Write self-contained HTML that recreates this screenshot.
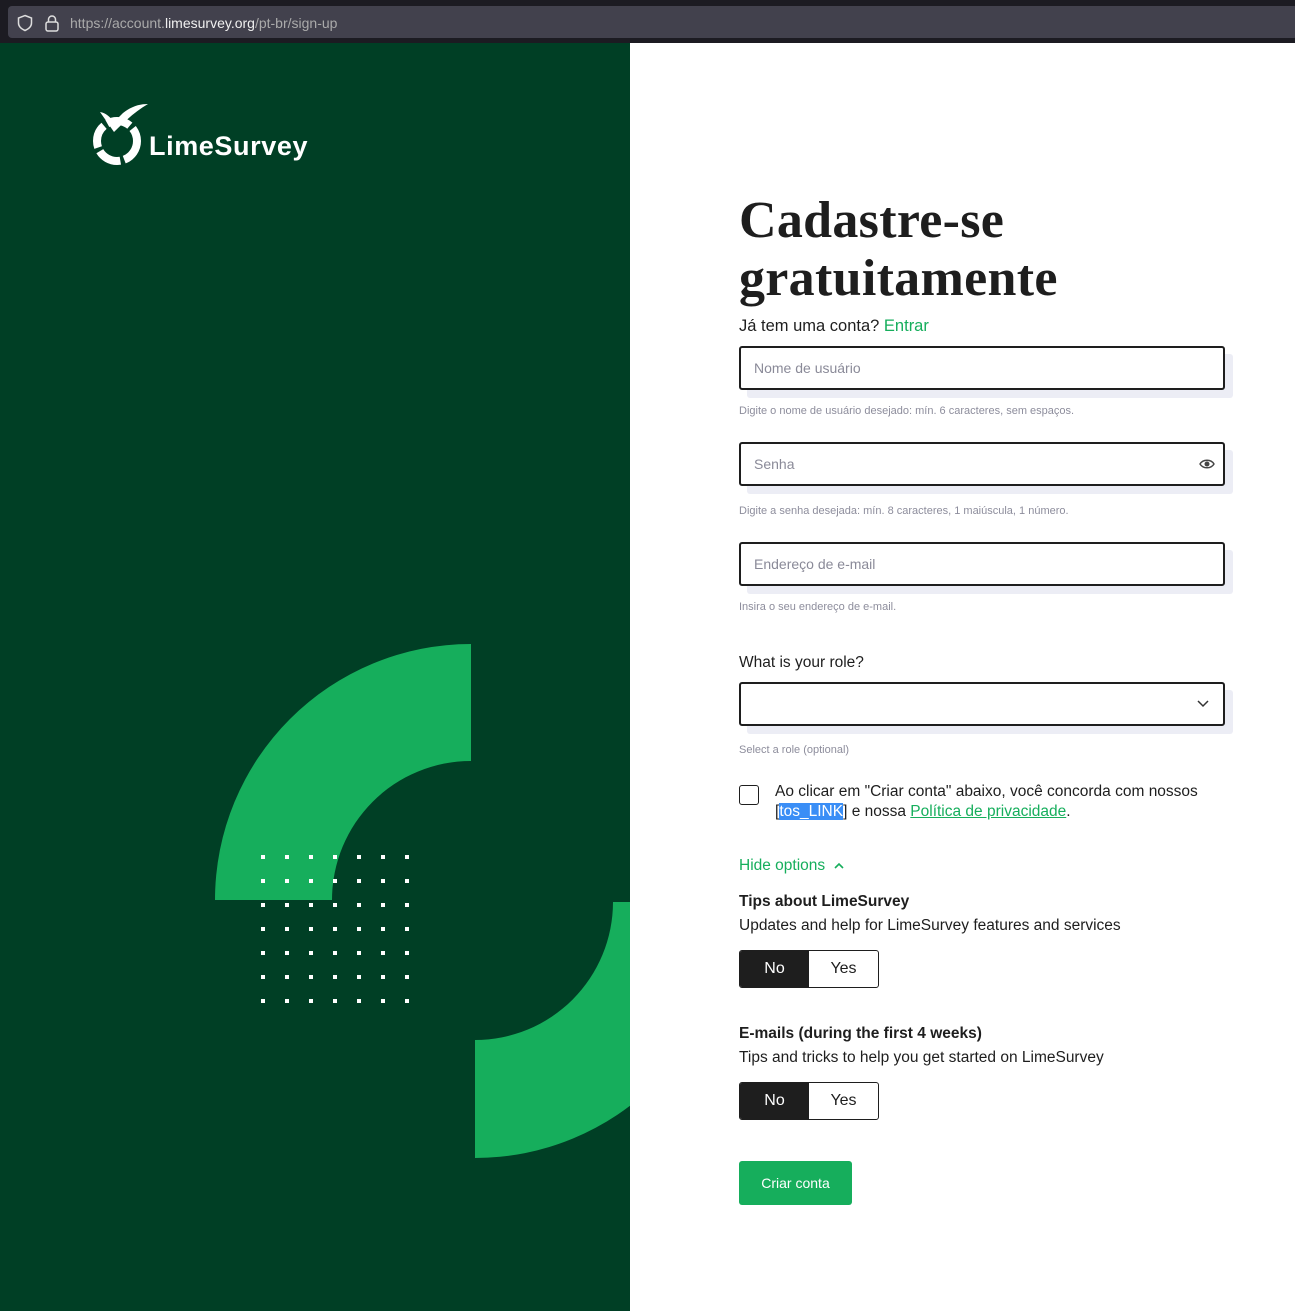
<!DOCTYPE html>
<html><head><meta charset="utf-8"><style>
*{margin:0;padding:0;box-sizing:border-box}
body{width:1295px;height:1311px;position:relative;background:#fff;font-family:"Liberation Sans",sans-serif;overflow:hidden;color:#1e1e1e}
.abs{position:absolute}
.top{left:0;top:0;width:1295px;height:43px;background:#1c1b22}
.url{left:8px;top:6px;width:1290px;height:32px;background:#42414d;border-radius:4px}
.left{left:0;top:43px;width:630px;height:1268px;background:#003f25;overflow:hidden}
.inp{position:absolute;left:739px;width:486px;height:44px;border:2px solid #1e1e1e;border-radius:3px;background:#fff;font-size:14px;color:#8a8a98;padding:12px 13px;box-shadow:8px 8px 0 #ecedf5}
.hint{position:absolute;left:739px;font-size:11px;color:#8d8d9c}
.t16{position:absolute;left:739px;font-size:15.5px}
.tog{position:absolute;left:739px;width:140px;height:38px;border:1px solid #1e1e1e;border-radius:3px;display:flex;overflow:hidden;font-size:16px}
.tog div{width:69px;display:flex;align-items:center;justify-content:center}
.tog .on{background:#1e1e1e;color:#fff}
</style></head><body>
<div class="abs top"></div>
<div class="abs url"></div>
<svg class="abs" style="left:16px;top:14px" width="18" height="18" viewBox="0 0 18 18"><path d="M9 1.5 L15.5 4 V9 C15.5 12.5 12.5 15 9 16.5 C5.5 15 2.5 12.5 2.5 9 V4 Z" fill="none" stroke="#ddd" stroke-width="1.5"/></svg>
<svg class="abs" style="left:44px;top:14px" width="16" height="18" viewBox="0 0 16 18"><rect x="2" y="8" width="12" height="9" rx="2" fill="none" stroke="#ddd" stroke-width="1.5"/><path d="M4.5 8 V5.5 a3.5 3.5 0 0 1 7 0 V8" fill="none" stroke="#ddd" stroke-width="1.5"/></svg>
<div class="abs" style="left:70px;top:15px;font-size:14px;color:#aaa">https://account.<span style="color:#f0f0f0">limesurvey.org</span>/pt-br/sign-up</div>

<div class="abs left">
<svg width="630" height="1311" style="position:absolute;left:0;top:-43px" viewBox="0 0 630 1311">
<path d="M471 644 A256 256 0 0 0 215 900 L332 900 A139 139 0 0 1 471 761 Z" fill="#16ae5c"/>
<path d="M475 1158 A256 256 0 0 0 731 902 L613 902 A138 138 0 0 1 475 1040 Z" fill="#16ae5c"/>
<path d="M123 113 C132 106 140 104 148 104 C136 111 126 120 114 132 L100 112 C106 113 110 117 114 122 Z" fill="#fff"/>
<circle cx="117" cy="141" r="20" fill="none" stroke="#fff" stroke-width="8" stroke-dasharray="24 4"/>
<text x="149" y="155" fill="#fff" font-family="Liberation Sans" font-weight="bold" font-size="27" letter-spacing="0.6">LimeSurvey</text>
<defs><pattern id="p" x="261" y="855" width="24" height="24" patternUnits="userSpaceOnUse"><rect x="0" y="0" width="4" height="4" fill="#fff"/></pattern></defs>
<rect x="261" y="855" width="150" height="150" fill="url(#p)"/>
</svg>
</div>

<div class="abs" style="left:739px;top:192px;font-family:'Liberation Serif',serif;font-weight:bold;font-size:52px;line-height:58px;color:#1e1e1e;letter-spacing:0.3px">Cadastre-se<br>gratuitamente</div>
<div class="t16" style="top:317px;font-size:16.5px">Já tem uma conta? <span style="color:#16ae5c">Entrar</span></div>

<div class="inp" style="top:346px">Nome de usuário</div>
<div class="hint" style="top:405px">Digite o nome de usuário desejado: mín. 6 caracteres, sem espaços.</div>
<div class="inp" style="top:442px">Senha</div>
<svg class="abs" style="left:1199px;top:458px" width="16" height="12" viewBox="0 0 16 12"><path d="M1 6 C4 1 12 1 15 6 C12 11 4 11 1 6Z" fill="none" stroke="#444" stroke-width="1.4"/><circle cx="8" cy="6" r="2.5" fill="#444"/></svg>
<div class="hint" style="top:505px">Digite a senha desejada: mín. 8 caracteres, 1 maiúscula, 1 número.</div>
<div class="inp" style="top:542px">Endereço de e-mail</div>
<div class="hint" style="top:601px">Insira o seu endereço de e-mail.</div>

<div class="t16" style="top:654px">What is your role?</div>
<div class="inp" style="top:682px"></div>
<svg class="abs" style="left:1197px;top:700px" width="12" height="8"><path d="M1 1 L6 6 L11 1" fill="none" stroke="#333" stroke-width="1.5"/></svg>
<div class="hint" style="top:744px">Select a role (optional)</div>

<div class="abs" style="left:739px;top:785px;width:20px;height:20px;border:1.5px solid #1e1e1e;border-radius:3px"></div>
<div class="abs" style="left:775px;top:782px;font-size:15.5px;line-height:20px;width:440px">Ao clicar em "Criar conta" abaixo, você concorda com nossos [<span style="background:#3a8ef6;color:#fff">tos_LINK</span>] e nossa <span style="color:#16ae5c;text-decoration:underline">Política de privacidade</span>.</div>

<div class="t16" style="top:857px;color:#16ae5c">Hide options&nbsp; <svg width="10" height="8"><path d="M1 6 L5 2 L9 6" fill="none" stroke="#16ae5c" stroke-width="1.6"/></svg></div>
<div class="t16" style="top:893px;font-weight:bold">Tips about LimeSurvey</div>
<div class="t16" style="top:917px">Updates and help for LimeSurvey features and services</div>
<div class="tog" style="top:950px"><div class="on">No</div><div>Yes</div></div>
<div class="t16" style="top:1025px;font-weight:bold">E-mails (during the first 4 weeks)</div>
<div class="t16" style="top:1049px">Tips and tricks to help you get started on LimeSurvey</div>
<div class="tog" style="top:1082px"><div class="on">No</div><div>Yes</div></div>
<div class="abs" style="left:739px;top:1161px;width:113px;height:44px;background:#16ae5c;border-radius:3px;color:#fff;font-size:14px;display:flex;align-items:center;justify-content:center">Criar conta</div>
</body></html>
